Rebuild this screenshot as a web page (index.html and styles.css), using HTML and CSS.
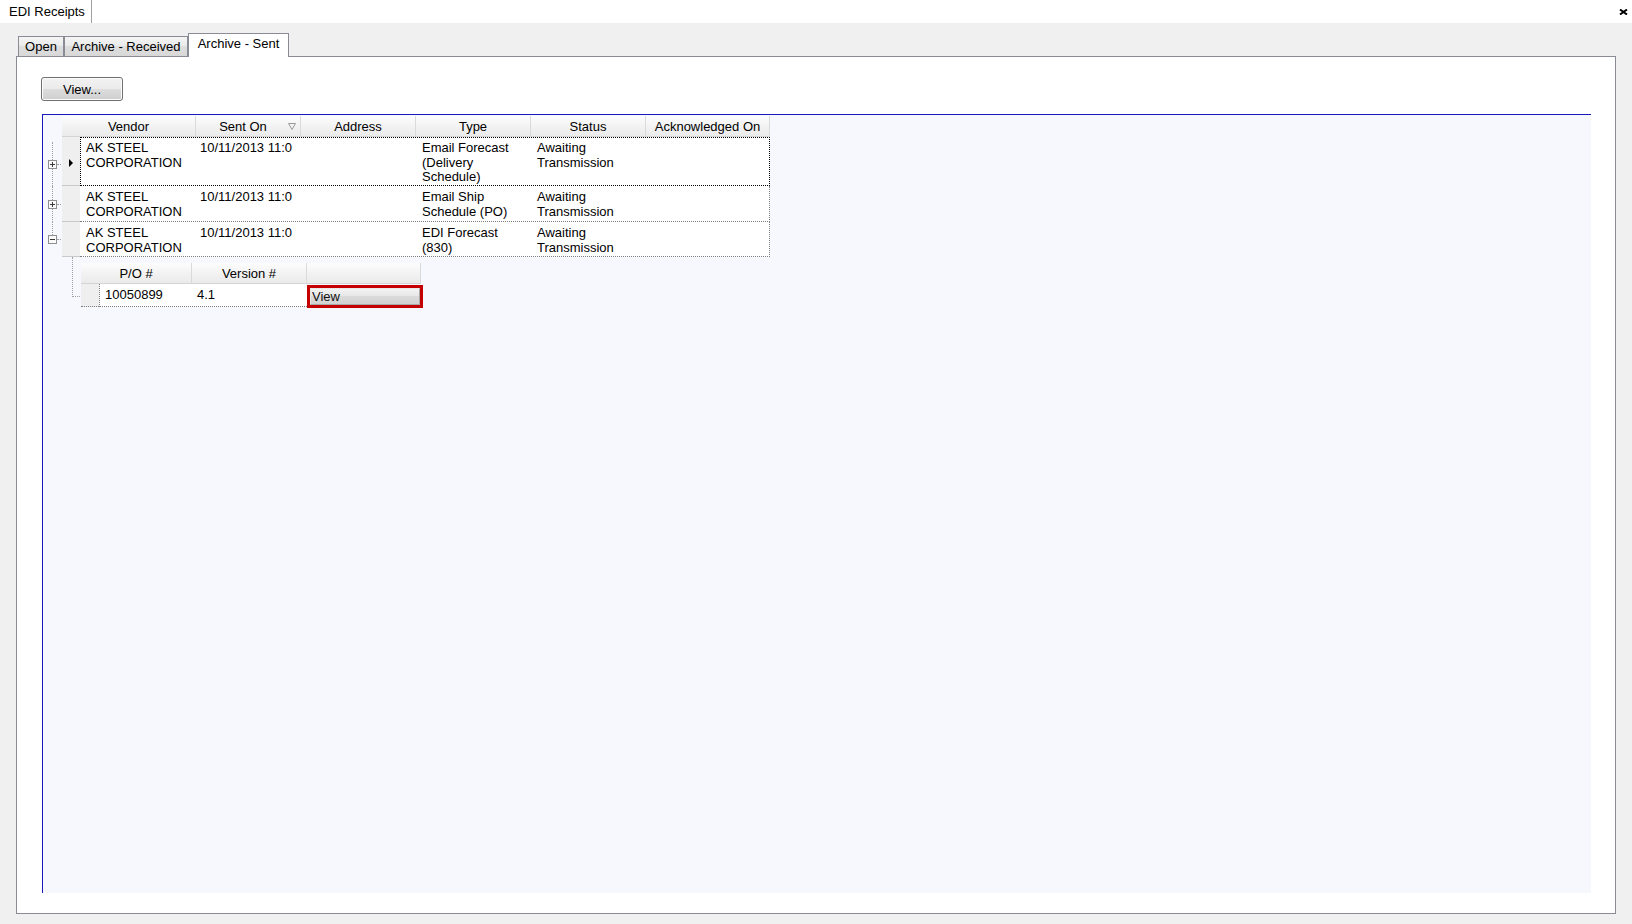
FILE: index.html
```html
<!DOCTYPE html>
<html>
<head>
<meta charset="utf-8">
<title>EDI Receipts</title>
<link rel="stylesheet" href="styles.css">
</head>
<body>
<div class="titlebar">
  <div class="doc-tab">EDI Receipts</div>
  <button class="close" aria-label="Close"><svg width="9" height="6" viewBox="0 0 9 6"><path d="M1 0.5 L8 5.5 M8 0.5 L1 5.5" stroke="#000" stroke-width="2"/></svg></button>
</div>
<div class="content">
  <div class="tabs">
    <div class="tab tab-open">Open</div>
    <div class="tab tab-received">Archive - Received</div>
    <div class="tab tab-sent active">Archive - Sent</div>
  </div>
  <div class="panel">
    <button class="btn-view">View...</button>
    <div class="grid">
      <div class="hdr-row">
        <div class="tree-spacer"></div>
        <div class="hc hv">Vendor</div>
        <div class="hc hs"><span class="hs-text">Sent On</span><svg class="sort" width="8" height="7" viewBox="0 0 8 7"><path d="M0.5 0.5 H7.5 L4 6.5 Z" fill="none" stroke="#9a9a9a"/></svg></div>
        <div class="hc ha">Address</div>
        <div class="hc ht">Type</div>
        <div class="hc hst">Status</div>
        <div class="hc hk">Acknowledged On</div>
      </div>

      <div class="row row-1 focused">
        <div class="tree first">
          <div class="ln"></div>
          <div class="node"><svg width="9" height="9" viewBox="0 0 9 9"><rect x="0.5" y="0.5" width="8" height="8" fill="#fafafa" stroke="#8f8f8f"/><path d="M2 4.5 H7 M4.5 2 V7" stroke="#3a3a3a"/></svg><span class="stub"></span></div>
          <div class="ln"></div>
        </div>
        <div class="sel"><svg width="4" height="8" viewBox="0 0 4 8"><path d="M0 0 L4 4 L0 8 Z" fill="#000"/></svg></div>
        <div class="cells">
          <div class="c cv">AK STEEL CORPORATION</div>
          <div class="c cs">10/11/2013 11:0</div>
          <div class="c ca"></div>
          <div class="c ct">Email Forecast (Delivery Schedule)</div>
          <div class="c cst">Awaiting Transmission</div>
          <div class="c ck"></div>
        </div>
      </div>

      <div class="row row-2">
        <div class="tree">
          <div class="ln"></div>
          <div class="node"><svg width="9" height="9" viewBox="0 0 9 9"><rect x="0.5" y="0.5" width="8" height="8" fill="#fafafa" stroke="#8f8f8f"/><path d="M2 4.5 H7 M4.5 2 V7" stroke="#3a3a3a"/></svg><span class="stub"></span></div>
          <div class="ln"></div>
        </div>
        <div class="sel"></div>
        <div class="cells">
          <div class="c cv">AK STEEL CORPORATION</div>
          <div class="c cs">10/11/2013 11:0</div>
          <div class="c ca"></div>
          <div class="c ct">Email Ship Schedule (PO)</div>
          <div class="c cst">Awaiting Transmission</div>
          <div class="c ck"></div>
        </div>
      </div>

      <div class="row row-3">
        <div class="tree">
          <div class="ln"></div>
          <div class="node"><svg width="9" height="9" viewBox="0 0 9 9"><rect x="0.5" y="0.5" width="8" height="8" fill="#fafafa" stroke="#8f8f8f"/><path d="M2 4.5 H7" stroke="#3a3a3a"/></svg><span class="stub"></span></div>
          <div class="ln blank"></div>
        </div>
        <div class="sel"></div>
        <div class="cells">
          <div class="c cv">AK STEEL CORPORATION</div>
          <div class="c cs">10/11/2013 11:0</div>
          <div class="c ca"></div>
          <div class="c ct">EDI Forecast (830)</div>
          <div class="c cst">Awaiting Transmission</div>
          <div class="c ck"></div>
        </div>
      </div>

      <div class="child">
        <div class="child-tree"><div class="elbow"></div></div>
        <div class="child-table">
          <div class="chdr">
            <div class="hc cpo-h">P/O #</div>
            <div class="hc cver-h">Version #</div>
            <div class="hc cbtn-h"></div>
          </div>
          <div class="crow">
            <div class="csel"></div>
            <div class="cdata">
              <div class="c cpo">10050899</div>
              <div class="c cver">4.1</div>
            </div>
            <div class="cbtn-cell"><button class="cbtn">View</button></div>
          </div>
        </div>
      </div>
    </div>
  </div>
</div>
</body>
</html>
```

FILE: styles.css
```css
* { box-sizing: border-box; }

body {
  margin: 0;
  width: 1632px;
  height: 924px;
  overflow: hidden;
  background: #f0f0f0;
  font: 13px "Liberation Sans", Arial, sans-serif;
  color: #000;
}

/* ---------- title bar ---------- */
.titlebar {
  height: 23px;
  background: #fff;
  display: flex;
  justify-content: space-between;
  align-items: flex-start;
}
.doc-tab {
  height: 23px;
  line-height: 24px;
  padding: 0 6px 0 9px;
  border-right: 1px solid #a0a0a0;
}
.close {
  border: 0;
  background: none;
  padding: 0;
  margin: 9px 4px 0 0;
  width: 9px;
  height: 6px;
}
.close svg { display: block; }

/* ---------- tab control ---------- */
.content {
  padding: 10px 16px 10px 16px;
}
.tabs {
  display: flex;
  align-items: flex-end;
  height: 24px;
  margin: 0 0 -1px 2px;
}
.tab {
  position: relative;
  z-index: 1;
  height: 20px;
  margin-bottom: 1px;
  border: 1px solid #898c95;
  border-bottom: none;
  background: linear-gradient(#f5f5f5, #e9e9e9 50%, #dedede 50%, #d8d8d8);
  line-height: 19px;
  text-align: center;
  white-space: nowrap;
}
.tab-open { width: 46px; }
.tab-received { width: 124px; }
.tab-sent { width: 101px; }
.tab.active {
  height: 24px;
  margin-bottom: 0;
  background: #fff;
  line-height: 19px;
}

.panel {
  height: 858px;
  border: 1px solid #898c95;
  background: #fff;
  padding: 20px 24px 20px 24px;
  display: flex;
  flex-direction: column;
  align-items: flex-start;
}

.btn-view {
  width: 82px;
  height: 24px;
  padding: 0;
  font: inherit;
  color: #000;
  border: 1px solid #707070;
  border-radius: 3px;
  background: linear-gradient(#f2f2f2, #ebebeb 50%, #dddddd 50%, #cfcfcf);
  box-shadow: inset 0 0 0 1px #fcfcfc;
}

/* ---------- grid ---------- */
.grid {
  align-self: stretch;
  flex: 1;
  margin: 13px 0 0 1px;
  border-top: 1px solid #1818c0;
  border-left: 1px solid #1818c0;
  background: #f7f8fd;
  padding-top: 1px;
}

.hdr-row {
  display: flex;
  height: 21px;
}
.tree-spacer { width: 19px; flex: none; }

.hc {
  flex: none;
  height: 21px;
  background: linear-gradient(#fdfdfd, #f1f1f1 60%, #ebebeb);
  border-right: 1px solid #dadada;
  border-bottom: 1px solid #d4d4d4;
  display: flex;
  align-items: center;
  justify-content: center;
  white-space: nowrap;
}
.hv { width: 134px; }
.hs { width: 105px; justify-content: flex-start; }
.hs-text { flex: 1; text-align: center; padding-left: 2px; }
.sort { display: block; margin-right: 4px; flex: none; }
.ha { width: 115px; }
.ht { width: 115px; }
.hst { width: 115px; }
.hk { width: 124px; }

.row {
  display: flex;
}
.row-1 { height: 49px; }
.row-2 { height: 36px; }
.row-3 { height: 35px; }

.tree {
  width: 19px;
  flex: none;
  display: flex;
  flex-direction: column;
}
.tree.first { padding-top: 5px; }
.tree .ln {
  flex: 1;
  margin-left: 9px;
  border-left: 1px dotted #a0a0a0;
}
.tree .ln.blank { border-left-color: transparent; }
.tree .node {
  display: flex;
  align-items: center;
  margin-left: 5px;
  height: 9px;
}
.node svg { display: block; flex: none; }
.node .stub {
  width: 4px;
  border-top: 1px dotted #a0a0a0;
}

.sel {
  width: 18px;
  flex: none;
  background: #efefef;
  border-bottom: 1px solid #c9c9c9;
  display: flex;
  align-items: center;
  justify-content: center;
  padding-top: 3px;
}
.sel svg { display: block; }

.cells {
  width: 690px;
  flex: none;
  display: flex;
  background: #fff;
  border-bottom: 1px dotted #7c7c7c;
  border-right: 1px dotted #7c7c7c;
}
.row.focused .cells {
  outline: 1px dotted #000;
  outline-offset: -1px;
}

.c {
  flex: none;
  padding: 4px 4px 0 5px;
  line-height: 14.5px;
  overflow: hidden;
}
.cv { width: 116px; padding-left: 6px; }
.cs { width: 105px; padding-left: 4px; white-space: nowrap; }
.ca { width: 115px; }
.ct { width: 115px; padding-left: 6px; }
.cst { width: 115px; padding-left: 6px; }
.ck { width: 123px; }

/* ---------- child band ---------- */
.child {
  display: flex;
}
.child-tree {
  width: 38px;
  flex: none;
}
.elbow {
  margin-left: 29px;
  width: 8px;
  height: 40px;
  border-left: 1px dotted #a0a0a0;
  border-bottom: 1px dotted #a0a0a0;
}
.child-table {
  padding-top: 6px;
}
.chdr {
  display: flex;
  height: 21px;
}
.cpo-h { width: 111px; }
.cver-h { width: 115px; }
.cbtn-h { width: 114px; }

.crow {
  display: flex;
  height: 23px;
}
.csel {
  width: 18px;
  flex: none;
  background: #efefef;
  border-bottom: 1px dotted #7c7c7c;
}
.cdata {
  display: flex;
  background: #fff;
  border-left: 1px dotted #7c7c7c;
  border-bottom: 1px dotted #7c7c7c;
}
.cpo { width: 92px; padding-top: 4px; padding-left: 5px; }
.cver { width: 115px; padding-top: 4px; padding-left: 5px; }

.cbtn-cell {
  width: 116px;
  height: 23px;
  margin-top: 1px;
  border: 3px solid #c40000;
  flex: none;
}
.cbtn {
  display: block;
  width: 100%;
  height: 100%;
  margin: 0;
  padding: 0 0 0 1px;
  font: inherit;
  line-height: 15px;
  text-align: left;
  color: #111;
  border: 1px solid #a9a9a9;
  border-top-color: #e8e8e8;
  border-left-color: #e8e8e8;
  background: linear-gradient(#f3f3f3, #e6e6e6 50%, #dadada 50%, #d2d2d2);
}
```
